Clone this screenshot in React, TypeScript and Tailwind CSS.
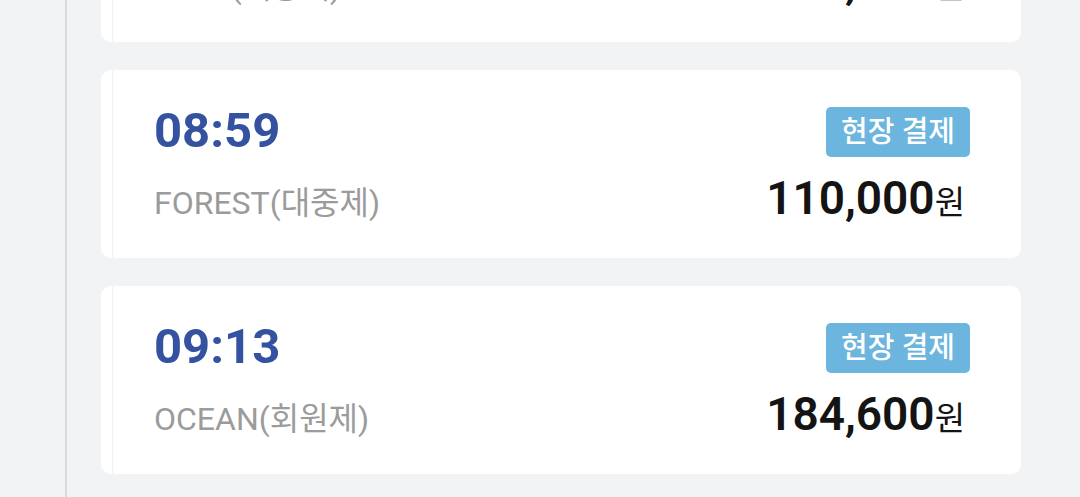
const rows = [
  { time: "08:45", course: "LAKE(대중제)", price: "152,000" },
  { time: "08:59", course: "FOREST(대중제)", price: "110,000" },
  { time: "09:13", course: "OCEAN(회원제)", price: "184,600" },
];

const font = { fontFamily: 'Roboto, "Noto Sans CJK KR", sans-serif' };

function TeeCard({ time, course, price }: { time: string; course: string; price: string }) {
  return (
    <div className="h-[188px] shrink-0 rounded-[10px] bg-white pl-[11px]">
      <div className="flex h-full flex-col border-l border-[#f1f1f1] pl-[41px] pr-[51px] pt-[36px]">
        <div className="flex items-start justify-between">
          <span className="text-[49px] font-bold leading-none text-[#3452a0]">{time}</span>
          <span className="mt-[1px] flex h-[50px] items-center rounded-[5px] bg-[#6bb5de] px-[15px] text-[29px] font-medium leading-none text-white">
            현장 결제
          </span>
        </div>
        <div className="mt-[18px] flex items-baseline justify-between">
          <span className="text-[32px] leading-none text-[#9b9b9b]">{course}</span>
          <span className="mr-[5px] leading-none text-[#141414]">
            <span className="text-[46px] font-semibold">{price}</span>
            <span className="text-[33px]">원</span>
          </span>
        </div>
      </div>
    </div>
  );
}

export default function App() {
  return (
    <div className="flex h-[497px] w-[1080px] overflow-hidden bg-[#f2f3f5]" style={font}>
      <div className="ml-[65px] w-[2px] shrink-0 bg-[#d5d9e2]" />
      <div className="-mt-[146px] ml-[34px] flex w-[920px] flex-col gap-[28px]">
        {rows.map((r) => (
          <TeeCard key={r.time} {...r} />
        ))}
      </div>
    </div>
  );
}
